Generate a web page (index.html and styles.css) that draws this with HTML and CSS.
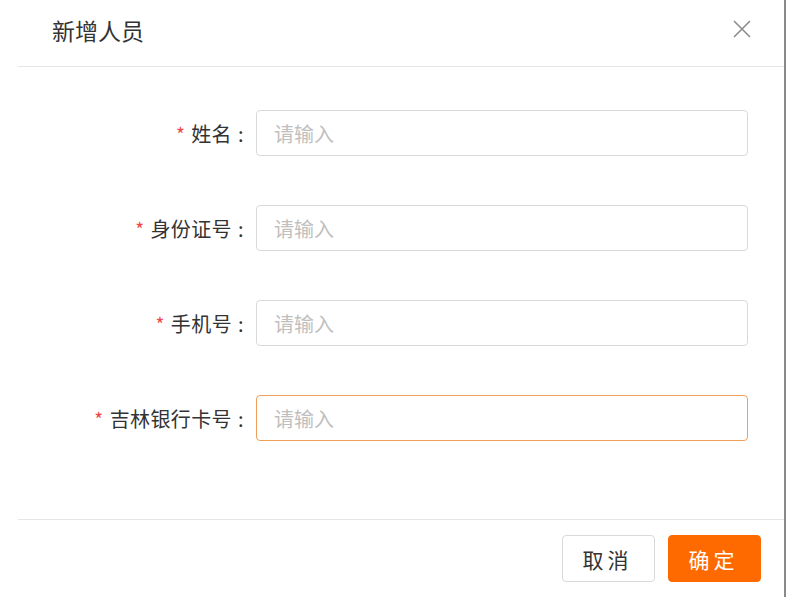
FILE: index.html
```html
<!DOCTYPE html>
<html lang="zh-CN">
<head>
<meta charset="UTF-8">
<title>新增人员</title>
<link rel="stylesheet" href="styles.css">
</head>
<body>
<div class="modal">
  <div class="modal-header">
    <h3>新增人员</h3>
    <span class="close">
      <svg width="18" height="18" viewBox="0 0 18 18"><path d="M1 1L17 17M17 1L1 17" stroke="#8c8c8c" stroke-width="1.6" fill="none"/></svg>
    </span>
  </div>
  <form class="modal-body">
    <div class="row">
      <label for="name"><i>*</i>姓名<b>:</b></label>
      <input type="text" id="name" placeholder="请输入">
    </div>
    <div class="row">
      <label for="idno"><i>*</i>身份证号<b>:</b></label>
      <input type="text" id="idno" placeholder="请输入">
    </div>
    <div class="row">
      <label for="phone"><i>*</i>手机号<b>:</b></label>
      <input type="text" id="phone" placeholder="请输入">
    </div>
    <div class="row">
      <label for="card"><i>*</i>吉林银行卡号<b>:</b></label>
      <input type="text" id="card" class="focused" placeholder="请输入">
    </div>
  </form>
  <div class="modal-footer">
    <button type="button" class="btn">取消</button>
    <button type="button" class="btn btn-primary">确定</button>
  </div>
</div>
</body>
</html>
```

FILE: styles.css
```css
body {
  margin: 0;
  background: #fff;
  font-family: "Noto Sans CJK SC", "Noto Sans", sans-serif;
  color: #333;
}

.modal {
  width: 784px;
  height: 597px;
  border-right: 2px solid #8a8a8a;
  background: #fff;
  display: flex;
  flex-direction: column;
}

.modal-header {
  height: 66px;
  margin-left: 18px;
  border-bottom: 1px solid #e6e6e6;
  display: flex;
  align-items: center;
  justify-content: space-between;
  padding: 0 33px 0 34px;
}

.modal-header h3 {
  margin: 0 0 6px;
  font-size: 23px;
  font-weight: normal;
  color: #333;
}

.close {
  display: flex;
  margin-bottom: 8px;
}

.modal-body {
  flex: 1;
  padding: 43px 36px 0 0;
  display: flex;
  flex-direction: column;
  gap: 49px;
}

.row {
  display: grid;
  grid-template-columns: 247px 1fr;
  column-gap: 9px;
  align-items: center;
}

.row label {
  text-align: right;
  font-size: 20px;
  letter-spacing: 0.4px;
  color: #333;
}

.row label i {
  font-style: normal;
  color: #f04848;
  font-size: 19px;
  margin-right: 6px;
}

.row label b {
  font-weight: normal;
  margin: 0 3px 0 6px;
}

.row input {
  height: 46px;
  box-sizing: border-box;
  border: 1px solid #d9d9d9;
  border-radius: 4px;
  padding: 0 17px;
  font-size: 20px;
  font-family: inherit;
  outline: none;
}

.row input::placeholder {
  color: #bfbfbf;
}

.row input.focused {
  border-color: #eea05a;
}

.modal-footer {
  height: 78px;
  margin-left: 18px;
  border-top: 1px solid #e6e6e6;
  box-sizing: border-box;
  display: flex;
  justify-content: flex-end;
  align-items: flex-start;
  padding: 15px 23px 0 0;
  gap: 13px;
}

.btn {
  width: 93px;
  height: 47px;
  border: 1px solid #d9d9d9;
  border-radius: 4px;
  background: #fff;
  color: #333;
  font-size: 21px;
  font-family: inherit;
  letter-spacing: 4px;
  padding-left: 4px;
}

.btn-primary {
  background: #ff6a00;
  border-color: #ff6a00;
  color: #fff;
}
```
